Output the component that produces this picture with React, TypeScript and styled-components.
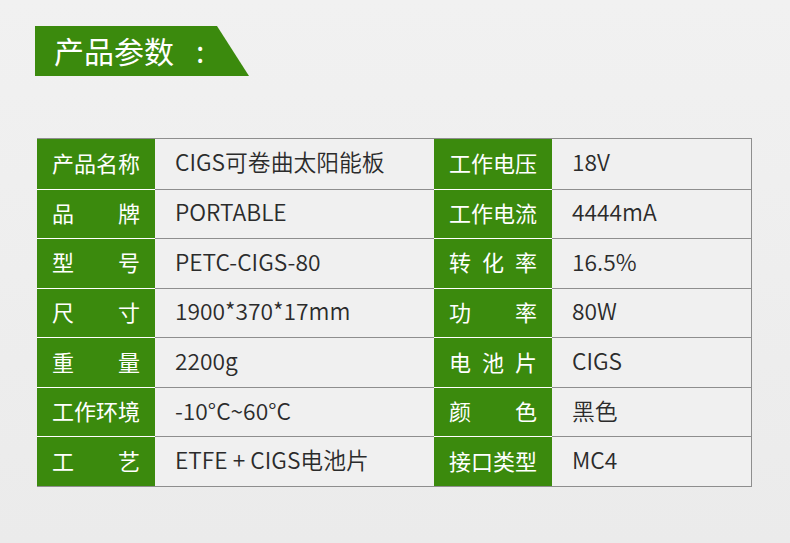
import React from "react";
import styled, { createGlobalStyle } from "styled-components";

const Global = createGlobalStyle`
  html, body { margin: 0; padding: 0; }
  body {
    background: linear-gradient(180deg, #f1f1f1 0%, #ebebeb 100%);
    font-family: "Noto Sans CJK SC", "Noto Sans", sans-serif;
  }
`;

const Page = styled.div`
  width: 790px;
  height: 543px;
  box-sizing: border-box;
  padding: 26px 0 0 35px;
  display: flex;
  flex-direction: column;
`;

const Banner = styled.div`
  width: 214px;
  height: 50px;
  background: #3b8a0d;
  clip-path: polygon(0 0, 182px 0, 100% 100%, 0 100%);
  color: #ffffff;
  font-size: 30px;
  line-height: 50px;
  padding: 0 0 2px 19px;
  box-sizing: border-box;
  display: flex;
  align-items: center;
`;

const Colon = styled.span`
  padding-left: 22px;
`;

const Table = styled.div`
  margin: 62px 0 0 2px;
  width: 715px;
  box-sizing: border-box;
  border-top: 1px solid #8e8e8e;
  border-right: 1px solid #8e8e8e;
  border-bottom: 1px solid #8e8e8e;
  display: grid;
  grid-template-rows: repeat(7, 1fr);
  height: 349px;
`;

const Row = styled.div<{ $first?: boolean }>`
  display: grid;
  grid-template-columns: 118px 279px 118px 1fr;
  & > * {
    border-top: ${(p) => (p.$first ? "none" : "1px solid")};
  }
`;

const Label = styled.div`
  background: #3b8a0d;
  border-color: #ffffff !important;
  color: #ffffff;
  font-size: 22px;
  padding: 0 15px 4px;
  display: flex;
  align-items: center;
  justify-content: space-between;
`;

const Value = styled.div`
  background: #f0f0f0;
  border-color: #8e8e8e !important;
  color: #2b2b2b;
  font-size: 22.8px;
  font-weight: 350;
  padding: 0 0 4px 20px;
  display: flex;
  align-items: center;
`;

const rows: [string, string, string, string][] = [
  ["产品名称", "CIGS可卷曲太阳能板", "工作电压", "18V"],
  ["品牌", "PORTABLE", "工作电流", "4444mA"],
  ["型号", "PETC-CIGS-80", "转化率", "16.5%"],
  ["尺寸", "1900*370*17mm", "功率", "80W"],
  ["重量", "2200g", "电池片", "CIGS"],
  ["工作环境", "-10°C~60°C", "颜色", "黑色"],
  ["工艺", "ETFE + CIGS电池片", "接口类型", "MC4"],
];

const LabelCell: React.FC<{ text: string }> = ({ text }) => (
  <Label>
    {Array.from(text).map((c, i) => (
      <span key={i}>{c}</span>
    ))}
  </Label>
);

export default function App() {
  return (
    <>
      <Global />
      <Page>
        <Banner>
          产品参数<Colon>:</Colon>
        </Banner>
        <Table>
          {rows.map((r, i) => (
            <Row key={i} $first={i === 0}>
              <LabelCell text={r[0]} />
              <Value>{r[1]}</Value>
              <LabelCell text={r[2]} />
              <Value>{r[3]}</Value>
            </Row>
          ))}
        </Table>
      </Page>
    </>
  );
}
